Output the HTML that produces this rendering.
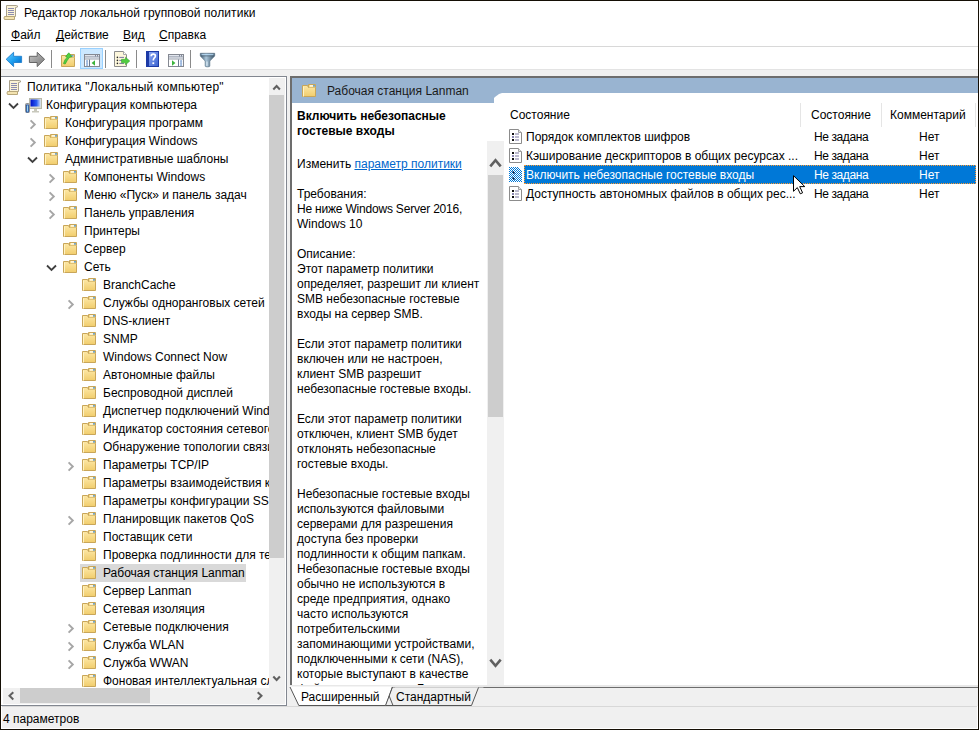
<!DOCTYPE html>
<html><head><meta charset="utf-8"><style>
*{margin:0;padding:0;box-sizing:border-box}
html,body{width:979px;height:730px;overflow:hidden;background:#f0f0f0}
body{position:relative;font-family:"Liberation Sans", sans-serif;font-size:12px;color:#000}
.a{position:absolute}
.ic{position:absolute;overflow:visible}
.t{position:absolute;white-space:nowrap;line-height:18px;height:18px}
u{text-decoration-skip-ink:none}
</style></head><body>
<!-- window frame -->
<div class="a" style="left:0;top:0;width:979px;height:730px;border:1px solid #140e04;background:#f0f0f0"></div>
<!-- title bar -->
<div class="a" style="left:1px;top:1px;width:977px;height:45px;background:#fff"></div>
<svg class="ic" style="left:3px;top:4px" width="16" height="16" viewBox="0 0 16 16">
<path d="M3.5 1.5H13.5Q15 1.5 14.5 3L12.5 3.5V12.5H3.5Z" fill="#fbf3d6" stroke="#a9a08a"/>
<path d="M1.5 12.5H11.5V15.5H1.5Q0.5 14 1.5 12.5Z" fill="#f3e3b0" stroke="#b8a77a"/>
<path d="M5 4.5H11M5 6.5H11M5 8.5H11M5 10.5H11" stroke="#8c8cb0" stroke-width="1"/>
</svg>
<div class="t" style="left:24px;top:4px;letter-spacing:0.1px">Редактор локальной групповой политики</div>
<!-- menu -->
<div class="t" style="left:11px;top:26px"><u>Ф</u>айл</div>
<div class="t" style="left:56px;top:26px"><u>Д</u>ействие</div>
<div class="t" style="left:123px;top:26px"><u>В</u>ид</div>
<div class="t" style="left:159px;top:26px"><u>С</u>правка</div>
<div class="a" style="left:1px;top:46px;width:977px;height:1px;background:#d8d8d8"></div>
<!-- toolbar -->
<div class="a" style="left:1px;top:47px;width:977px;height:22px;background:#fff"></div>
<div class="a" style="left:1px;top:69px;width:977px;height:1px;background:#e3e3e3"></div>

<svg class="ic" style="left:5px;top:51px" width="18" height="17" viewBox="0 0 18 17">
<defs><linearGradient id="bk" x1="0" y1="0" x2="1" y2="1"><stop offset="0" stop-color="#6fd0ff"/><stop offset="0.5" stop-color="#1ea0f0"/><stop offset="1" stop-color="#0060c0"/></linearGradient></defs>
<path d="M1.2 8.3L8.6 1.3V5.3H16.6V11.5H8.6V15.6Z" fill="url(#bk)" stroke="#2a86d0" stroke-width="1"/>
</svg>
<svg class="ic" style="left:28px;top:51px" width="18" height="17" viewBox="0 0 18 17">
<defs><linearGradient id="fw" x1="0" y1="0" x2="1" y2="1"><stop offset="0" stop-color="#c4c4c4"/><stop offset="1" stop-color="#7a7a7a"/></linearGradient></defs>
<path d="M16.6 8.3L9.2 1.3V5.3H1.4V11.5H9.2V15.6Z" fill="url(#fw)" stroke="#666" stroke-width="1"/>
</svg>
<div class="a" style="left:51px;top:50px;width:1px;height:18px;background:#8a8a8a"></div>
<svg class="ic" style="left:61px;top:52px" width="16" height="16" viewBox="0 0 16 16">
<defs><linearGradient id="fgu" x1="0" y1="0" x2="0" y2="1"><stop offset="0" stop-color="#fde8a6"/><stop offset="1" stop-color="#f1cd6c"/></linearGradient></defs>
<path d="M0.5 3.5H5.5L6.5 5.5H13.5V14.5H0.5Z" fill="url(#fgu)" stroke="#c9a659"/>
<path d="M6.5 5.5V2.5H13.5V5.5" fill="#f7dc8e" stroke="#c9a659"/>
<rect x="10" y="3.3" width="2.5" height="1.2" fill="#3d8fe0"/>
<path d="M2.5 11.5Q3.5 7.5 6.2 5.2L4.6 4.6L7.8 0.8L10.8 4.8L8.6 5.2Q6.2 8 4.2 12Z" fill="#52d040" stroke="#34a82a" stroke-width="0.7"/>
</svg>
<div class="a" style="left:80px;top:48px;width:23px;height:21px;background:#cce8ff;border:1px solid #99d1ff"></div>
<svg class="ic" style="left:84px;top:54px" width="16" height="13" viewBox="0 0 16 13">
<rect x="0.5" y="0.5" width="15" height="12" fill="#fff" stroke="#858992"/>
<rect x="1" y="1" width="14" height="2" fill="#e2e6ee"/><rect x="1" y="2.6" width="14" height="0.9" fill="#6a7386"/>
<rect x="11" y="1.2" width="1" height="1.2" fill="#6a7386"/><rect x="13" y="1.2" width="1" height="1.2" fill="#6a7386"/>
<rect x="1" y="3.5" width="14" height="1.5" fill="#e2e6ee"/><rect x="1" y="4.6" width="14" height="0.9" fill="#9aa0aa"/>
<rect x="5" y="5.5" width="1" height="7" fill="#6a7890"/>
<rect x="2" y="6.5" width="2.2" height="1" rx="0.5" fill="#3f75c0"/><rect x="2" y="8.5" width="2.2" height="1" rx="0.5" fill="#3f75c0"/><rect x="2" y="10.5" width="2.2" height="1" rx="0.5" fill="#3f75c0"/>
<path d="M11 6.2V11.8L7.6 9Z" fill="#3cb43c"/>
</svg>
<div class="a" style="left:105px;top:50px;width:1px;height:18px;background:#8a8a8a"></div>
<svg class="ic" style="left:114px;top:51px" width="17" height="16" viewBox="0 0 17 16">
<path d="M0.5 0.5H9.5L12.5 3.5V15.5H0.5Z" fill="#fdf7dc" stroke="#8c8c8c"/>
<path d="M9.5 0.5V3.5H12.5" fill="#fff" stroke="#a8a8a8"/>
<rect x="2.6" y="5.6" width="1.6" height="1.6" rx="0.8" fill="#222"/><rect x="2.6" y="8.6" width="1.6" height="1.6" rx="0.8" fill="#222"/><rect x="2.6" y="11.6" width="1.6" height="1.6" rx="0.8" fill="#222"/>
<path d="M5.3 6.4H10M5.3 9.4H10M5.3 12.4H10" stroke="#7a74a0"/>
<path d="M7.5 8.3H11.5V6.3L15.8 10L11.5 13.8V11.8H7.5Z" fill="#50cc40" stroke="#3aa830" stroke-width="0.6"/>
</svg>
<div class="a" style="left:136px;top:50px;width:1px;height:18px;background:#8a8a8a"></div>
<svg class="ic" style="left:146px;top:51px" width="13" height="16" viewBox="0 0 13 16">
<defs><linearGradient id="hp" x1="0" y1="0" x2="1" y2="1"><stop offset="0" stop-color="#8aa6f4"/><stop offset="1" stop-color="#3c64d0"/></linearGradient></defs>
<rect x="0" y="0" width="13" height="16" fill="#1c3aa6"/>
<rect x="3" y="1" width="9" height="14" fill="url(#hp)"/>
<path d="M5.2 5.2Q5.2 3.2 7.3 3.2Q9.4 3.2 9.4 5.1Q9.4 6.4 8 7.3Q7.3 7.9 7.3 9.6" fill="none" stroke="#fff" stroke-width="1.7"/>
<rect x="6.4" y="11.3" width="1.8" height="1.8" fill="#fff"/>
</svg>
<svg class="ic" style="left:168px;top:54px" width="16" height="13" viewBox="0 0 16 13">
<rect x="0.5" y="0.5" width="15" height="12" fill="#fff" stroke="#858992"/>
<rect x="1" y="1" width="14" height="2" fill="#e2e6ee"/><rect x="1" y="2.6" width="14" height="0.9" fill="#6a7386"/>
<rect x="11" y="1.2" width="1" height="1.2" fill="#6a7386"/><rect x="13" y="1.2" width="1" height="1.2" fill="#6a7386"/>
<rect x="1" y="3.5" width="14" height="1.5" fill="#e2e6ee"/><rect x="1" y="4.6" width="14" height="0.9" fill="#9aa0aa"/>
<rect x="10" y="5.5" width="1" height="7" fill="#6a7890"/>
<rect x="12" y="6.5" width="2.2" height="1" rx="0.5" fill="#3f75c0"/><rect x="12" y="8.5" width="2.2" height="1" rx="0.5" fill="#3f75c0"/><rect x="12" y="10.5" width="2.2" height="1" rx="0.5" fill="#3f75c0"/>
<path d="M4 6.2V11.8L7.4 9Z" fill="#3cb43c"/>
</svg>
<div class="a" style="left:190px;top:50px;width:1px;height:18px;background:#8a8a8a"></div>
<svg class="ic" style="left:200px;top:53px" width="15" height="14" viewBox="0 0 15 14">
<defs><linearGradient id="fl" x1="0" y1="0" x2="1" y2="0"><stop offset="0" stop-color="#3e566a"/><stop offset="0.4" stop-color="#aac6da"/><stop offset="1" stop-color="#3a5266"/></linearGradient></defs>
<path d="M0.3 0.3H14.7V3L9.8 8V13.2Q9.8 13.8 7.5 13.8Q5.2 13.8 5.2 13.2V8L0.3 3Z" fill="url(#fl)" stroke="#5a7488" stroke-width="0.7"/>
<rect x="1.5" y="1.2" width="12" height="1.1" fill="#b8dcf8"/><rect x="1" y="2.5" width="13" height="0.8" fill="#4a6276"/>
<path d="M7 8.5V12.8" stroke="#e8f4fc" stroke-width="1"/>
</svg>

<!-- tree pane -->
<div class="a" style="left:1px;top:76px;width:286px;height:630px;background:#fff;border-top:1px solid #828790;border-right:1px solid #828790;border-bottom:1px solid #828790"></div>
<div class="a" style="left:1px;top:77px;width:268px;height:611px;overflow:hidden">
<div style="position:absolute;left:-1px;top:-77px;width:979px;height:800px">
<svg class="ic" style="left:6px;top:79px" width="16" height="16" viewBox="0 0 16 16">
<path d="M3.5 1.5H13.5Q15 1.5 14.5 3L12.5 3.5V12.5H3.5Z" fill="#fbf3d6" stroke="#a9a08a"/>
<path d="M1.5 12.5H11.5V15.5H1.5Q0.5 14 1.5 12.5Z" fill="#f3e3b0" stroke="#b8a77a"/>
<path d="M5 4.5H11M5 6.5H11M5 8.5H11M5 10.5H11" stroke="#8c8cb0" stroke-width="1"/>
</svg>
<div class="t" style="left:27px;top:78px;letter-spacing:0.2px">Политика &quot;Локальный компьютер&quot;</div>
<svg class="ic" style="left:8px;top:102px" width="11" height="8" viewBox="0 0 11 8"><path d="M1 1.5L5.5 6L10 1.5" fill="none" stroke="#404040" stroke-width="1.8"/></svg>
<svg class="ic" style="left:25px;top:98px" width="17" height="16" viewBox="0 0 17 16">
<defs><linearGradient id="scr" x1="0" y1="0" x2="1" y2="0"><stop offset="0" stop-color="#0010c8"/><stop offset="0.6" stop-color="#2a5cf0"/><stop offset="1" stop-color="#c8dcff"/></linearGradient></defs>
<rect x="4.5" y="0.5" width="12" height="10" fill="#dcdcd0" stroke="#b8b8a8"/>
<rect x="5.5" y="1.5" width="10" height="7" fill="url(#scr)"/>
<path d="M9 11H12V13H14V14.5H7V13H9Z" fill="#c8c8bc"/>
<rect x="0.5" y="5.5" width="4" height="9" rx="1" fill="#c0c0c0" stroke="#909090"/>
<rect x="1.5" y="7" width="2" height="7" fill="#9ad4f4" stroke="#2050a0" stroke-width="0.8"/>
</svg>
<div class="t" style="left:46px;top:96px">Конфигурация компьютера</div>
<svg class="ic" style="left:29px;top:119px" width="8" height="11" viewBox="0 0 8 11"><path d="M1.6 1.4L5.8 5.5L1.6 9.6" fill="none" stroke="#a6a6a6" stroke-width="1.9"/></svg>
<svg class="ic" style="left:44px;top:116px" width="15" height="14" viewBox="0 0 15 14">
<defs><linearGradient id="fg44_116" x1="0" y1="0" x2="0" y2="1"><stop offset="0" stop-color="#fde8a6"/><stop offset="1" stop-color="#f1cd6c"/></linearGradient></defs>
<path d="M0.5 1.5H5.5L6.5 3.5H13.5V12.5H0.5Z" fill="url(#fg44_116)" stroke="#c9a659"/>
<path d="M6.5 3.5V0.5H13.5V3.5" fill="#f7dc8e" stroke="#c9a659"/>
<rect x="8" y="1.3" width="3" height="1.2" fill="#fff"/><rect x="11" y="1.3" width="2" height="1.2" fill="#3d8fe0"/>
<path d="M1.5 12.5V2.5" stroke="#fff3c4" stroke-width="1"/>
</svg>
<div class="t" style="left:65px;top:114px">Конфигурация программ</div>
<svg class="ic" style="left:29px;top:137px" width="8" height="11" viewBox="0 0 8 11"><path d="M1.6 1.4L5.8 5.5L1.6 9.6" fill="none" stroke="#a6a6a6" stroke-width="1.9"/></svg>
<svg class="ic" style="left:44px;top:134px" width="15" height="14" viewBox="0 0 15 14">
<defs><linearGradient id="fg44_134" x1="0" y1="0" x2="0" y2="1"><stop offset="0" stop-color="#fde8a6"/><stop offset="1" stop-color="#f1cd6c"/></linearGradient></defs>
<path d="M0.5 1.5H5.5L6.5 3.5H13.5V12.5H0.5Z" fill="url(#fg44_134)" stroke="#c9a659"/>
<path d="M6.5 3.5V0.5H13.5V3.5" fill="#f7dc8e" stroke="#c9a659"/>
<rect x="8" y="1.3" width="3" height="1.2" fill="#fff"/><rect x="11" y="1.3" width="2" height="1.2" fill="#3d8fe0"/>
<path d="M1.5 12.5V2.5" stroke="#fff3c4" stroke-width="1"/>
</svg>
<div class="t" style="left:65px;top:132px">Конфигурация Windows</div>
<svg class="ic" style="left:27px;top:156px" width="11" height="8" viewBox="0 0 11 8"><path d="M1 1.5L5.5 6L10 1.5" fill="none" stroke="#404040" stroke-width="1.8"/></svg>
<svg class="ic" style="left:44px;top:152px" width="15" height="14" viewBox="0 0 15 14">
<defs><linearGradient id="fg44_152" x1="0" y1="0" x2="0" y2="1"><stop offset="0" stop-color="#fde8a6"/><stop offset="1" stop-color="#f1cd6c"/></linearGradient></defs>
<path d="M0.5 1.5H5.5L6.5 3.5H13.5V12.5H0.5Z" fill="url(#fg44_152)" stroke="#c9a659"/>
<path d="M6.5 3.5V0.5H13.5V3.5" fill="#f7dc8e" stroke="#c9a659"/>
<rect x="8" y="1.3" width="3" height="1.2" fill="#fff"/><rect x="11" y="1.3" width="2" height="1.2" fill="#3d8fe0"/>
<path d="M1.5 12.5V2.5" stroke="#fff3c4" stroke-width="1"/>
</svg>
<div class="t" style="left:65px;top:150px">Административные шаблоны</div>
<svg class="ic" style="left:48px;top:173px" width="8" height="11" viewBox="0 0 8 11"><path d="M1.6 1.4L5.8 5.5L1.6 9.6" fill="none" stroke="#a6a6a6" stroke-width="1.9"/></svg>
<svg class="ic" style="left:63px;top:170px" width="15" height="14" viewBox="0 0 15 14">
<defs><linearGradient id="fg63_170" x1="0" y1="0" x2="0" y2="1"><stop offset="0" stop-color="#fde8a6"/><stop offset="1" stop-color="#f1cd6c"/></linearGradient></defs>
<path d="M0.5 1.5H5.5L6.5 3.5H13.5V12.5H0.5Z" fill="url(#fg63_170)" stroke="#c9a659"/>
<path d="M6.5 3.5V0.5H13.5V3.5" fill="#f7dc8e" stroke="#c9a659"/>
<rect x="8" y="1.3" width="3" height="1.2" fill="#fff"/><rect x="11" y="1.3" width="2" height="1.2" fill="#3d8fe0"/>
<path d="M1.5 12.5V2.5" stroke="#fff3c4" stroke-width="1"/>
</svg>
<div class="t" style="left:84px;top:168px">Компоненты Windows</div>
<svg class="ic" style="left:48px;top:191px" width="8" height="11" viewBox="0 0 8 11"><path d="M1.6 1.4L5.8 5.5L1.6 9.6" fill="none" stroke="#a6a6a6" stroke-width="1.9"/></svg>
<svg class="ic" style="left:63px;top:188px" width="15" height="14" viewBox="0 0 15 14">
<defs><linearGradient id="fg63_188" x1="0" y1="0" x2="0" y2="1"><stop offset="0" stop-color="#fde8a6"/><stop offset="1" stop-color="#f1cd6c"/></linearGradient></defs>
<path d="M0.5 1.5H5.5L6.5 3.5H13.5V12.5H0.5Z" fill="url(#fg63_188)" stroke="#c9a659"/>
<path d="M6.5 3.5V0.5H13.5V3.5" fill="#f7dc8e" stroke="#c9a659"/>
<rect x="8" y="1.3" width="3" height="1.2" fill="#fff"/><rect x="11" y="1.3" width="2" height="1.2" fill="#3d8fe0"/>
<path d="M1.5 12.5V2.5" stroke="#fff3c4" stroke-width="1"/>
</svg>
<div class="t" style="left:84px;top:186px">Меню «Пуск» и панель задач</div>
<svg class="ic" style="left:48px;top:209px" width="8" height="11" viewBox="0 0 8 11"><path d="M1.6 1.4L5.8 5.5L1.6 9.6" fill="none" stroke="#a6a6a6" stroke-width="1.9"/></svg>
<svg class="ic" style="left:63px;top:206px" width="15" height="14" viewBox="0 0 15 14">
<defs><linearGradient id="fg63_206" x1="0" y1="0" x2="0" y2="1"><stop offset="0" stop-color="#fde8a6"/><stop offset="1" stop-color="#f1cd6c"/></linearGradient></defs>
<path d="M0.5 1.5H5.5L6.5 3.5H13.5V12.5H0.5Z" fill="url(#fg63_206)" stroke="#c9a659"/>
<path d="M6.5 3.5V0.5H13.5V3.5" fill="#f7dc8e" stroke="#c9a659"/>
<rect x="8" y="1.3" width="3" height="1.2" fill="#fff"/><rect x="11" y="1.3" width="2" height="1.2" fill="#3d8fe0"/>
<path d="M1.5 12.5V2.5" stroke="#fff3c4" stroke-width="1"/>
</svg>
<div class="t" style="left:84px;top:204px">Панель управления</div>
<svg class="ic" style="left:63px;top:224px" width="15" height="14" viewBox="0 0 15 14">
<defs><linearGradient id="fg63_224" x1="0" y1="0" x2="0" y2="1"><stop offset="0" stop-color="#fde8a6"/><stop offset="1" stop-color="#f1cd6c"/></linearGradient></defs>
<path d="M0.5 1.5H5.5L6.5 3.5H13.5V12.5H0.5Z" fill="url(#fg63_224)" stroke="#c9a659"/>
<path d="M6.5 3.5V0.5H13.5V3.5" fill="#f7dc8e" stroke="#c9a659"/>
<rect x="8" y="1.3" width="3" height="1.2" fill="#fff"/><rect x="11" y="1.3" width="2" height="1.2" fill="#3d8fe0"/>
<path d="M1.5 12.5V2.5" stroke="#fff3c4" stroke-width="1"/>
</svg>
<div class="t" style="left:84px;top:222px">Принтеры</div>
<svg class="ic" style="left:63px;top:242px" width="15" height="14" viewBox="0 0 15 14">
<defs><linearGradient id="fg63_242" x1="0" y1="0" x2="0" y2="1"><stop offset="0" stop-color="#fde8a6"/><stop offset="1" stop-color="#f1cd6c"/></linearGradient></defs>
<path d="M0.5 1.5H5.5L6.5 3.5H13.5V12.5H0.5Z" fill="url(#fg63_242)" stroke="#c9a659"/>
<path d="M6.5 3.5V0.5H13.5V3.5" fill="#f7dc8e" stroke="#c9a659"/>
<rect x="8" y="1.3" width="3" height="1.2" fill="#fff"/><rect x="11" y="1.3" width="2" height="1.2" fill="#3d8fe0"/>
<path d="M1.5 12.5V2.5" stroke="#fff3c4" stroke-width="1"/>
</svg>
<div class="t" style="left:84px;top:240px">Сервер</div>
<svg class="ic" style="left:46px;top:264px" width="11" height="8" viewBox="0 0 11 8"><path d="M1 1.5L5.5 6L10 1.5" fill="none" stroke="#404040" stroke-width="1.8"/></svg>
<svg class="ic" style="left:63px;top:260px" width="15" height="14" viewBox="0 0 15 14">
<defs><linearGradient id="fg63_260" x1="0" y1="0" x2="0" y2="1"><stop offset="0" stop-color="#fde8a6"/><stop offset="1" stop-color="#f1cd6c"/></linearGradient></defs>
<path d="M0.5 1.5H5.5L6.5 3.5H13.5V12.5H0.5Z" fill="url(#fg63_260)" stroke="#c9a659"/>
<path d="M6.5 3.5V0.5H13.5V3.5" fill="#f7dc8e" stroke="#c9a659"/>
<rect x="8" y="1.3" width="3" height="1.2" fill="#fff"/><rect x="11" y="1.3" width="2" height="1.2" fill="#3d8fe0"/>
<path d="M1.5 12.5V2.5" stroke="#fff3c4" stroke-width="1"/>
</svg>
<div class="t" style="left:84px;top:258px">Сеть</div>
<svg class="ic" style="left:82px;top:278px" width="15" height="14" viewBox="0 0 15 14">
<defs><linearGradient id="fg82_278" x1="0" y1="0" x2="0" y2="1"><stop offset="0" stop-color="#fde8a6"/><stop offset="1" stop-color="#f1cd6c"/></linearGradient></defs>
<path d="M0.5 1.5H5.5L6.5 3.5H13.5V12.5H0.5Z" fill="url(#fg82_278)" stroke="#c9a659"/>
<path d="M6.5 3.5V0.5H13.5V3.5" fill="#f7dc8e" stroke="#c9a659"/>
<rect x="8" y="1.3" width="3" height="1.2" fill="#fff"/><rect x="11" y="1.3" width="2" height="1.2" fill="#3d8fe0"/>
<path d="M1.5 12.5V2.5" stroke="#fff3c4" stroke-width="1"/>
</svg>
<div class="t" style="left:103px;top:276px">BranchCache</div>
<svg class="ic" style="left:67px;top:299px" width="8" height="11" viewBox="0 0 8 11"><path d="M1.6 1.4L5.8 5.5L1.6 9.6" fill="none" stroke="#a6a6a6" stroke-width="1.9"/></svg>
<svg class="ic" style="left:82px;top:296px" width="15" height="14" viewBox="0 0 15 14">
<defs><linearGradient id="fg82_296" x1="0" y1="0" x2="0" y2="1"><stop offset="0" stop-color="#fde8a6"/><stop offset="1" stop-color="#f1cd6c"/></linearGradient></defs>
<path d="M0.5 1.5H5.5L6.5 3.5H13.5V12.5H0.5Z" fill="url(#fg82_296)" stroke="#c9a659"/>
<path d="M6.5 3.5V0.5H13.5V3.5" fill="#f7dc8e" stroke="#c9a659"/>
<rect x="8" y="1.3" width="3" height="1.2" fill="#fff"/><rect x="11" y="1.3" width="2" height="1.2" fill="#3d8fe0"/>
<path d="M1.5 12.5V2.5" stroke="#fff3c4" stroke-width="1"/>
</svg>
<div class="t" style="left:103px;top:294px">Службы одноранговых сетей</div>
<svg class="ic" style="left:82px;top:314px" width="15" height="14" viewBox="0 0 15 14">
<defs><linearGradient id="fg82_314" x1="0" y1="0" x2="0" y2="1"><stop offset="0" stop-color="#fde8a6"/><stop offset="1" stop-color="#f1cd6c"/></linearGradient></defs>
<path d="M0.5 1.5H5.5L6.5 3.5H13.5V12.5H0.5Z" fill="url(#fg82_314)" stroke="#c9a659"/>
<path d="M6.5 3.5V0.5H13.5V3.5" fill="#f7dc8e" stroke="#c9a659"/>
<rect x="8" y="1.3" width="3" height="1.2" fill="#fff"/><rect x="11" y="1.3" width="2" height="1.2" fill="#3d8fe0"/>
<path d="M1.5 12.5V2.5" stroke="#fff3c4" stroke-width="1"/>
</svg>
<div class="t" style="left:103px;top:312px">DNS-клиент</div>
<svg class="ic" style="left:82px;top:332px" width="15" height="14" viewBox="0 0 15 14">
<defs><linearGradient id="fg82_332" x1="0" y1="0" x2="0" y2="1"><stop offset="0" stop-color="#fde8a6"/><stop offset="1" stop-color="#f1cd6c"/></linearGradient></defs>
<path d="M0.5 1.5H5.5L6.5 3.5H13.5V12.5H0.5Z" fill="url(#fg82_332)" stroke="#c9a659"/>
<path d="M6.5 3.5V0.5H13.5V3.5" fill="#f7dc8e" stroke="#c9a659"/>
<rect x="8" y="1.3" width="3" height="1.2" fill="#fff"/><rect x="11" y="1.3" width="2" height="1.2" fill="#3d8fe0"/>
<path d="M1.5 12.5V2.5" stroke="#fff3c4" stroke-width="1"/>
</svg>
<div class="t" style="left:103px;top:330px">SNMP</div>
<svg class="ic" style="left:82px;top:350px" width="15" height="14" viewBox="0 0 15 14">
<defs><linearGradient id="fg82_350" x1="0" y1="0" x2="0" y2="1"><stop offset="0" stop-color="#fde8a6"/><stop offset="1" stop-color="#f1cd6c"/></linearGradient></defs>
<path d="M0.5 1.5H5.5L6.5 3.5H13.5V12.5H0.5Z" fill="url(#fg82_350)" stroke="#c9a659"/>
<path d="M6.5 3.5V0.5H13.5V3.5" fill="#f7dc8e" stroke="#c9a659"/>
<rect x="8" y="1.3" width="3" height="1.2" fill="#fff"/><rect x="11" y="1.3" width="2" height="1.2" fill="#3d8fe0"/>
<path d="M1.5 12.5V2.5" stroke="#fff3c4" stroke-width="1"/>
</svg>
<div class="t" style="left:103px;top:348px">Windows Connect Now</div>
<svg class="ic" style="left:82px;top:368px" width="15" height="14" viewBox="0 0 15 14">
<defs><linearGradient id="fg82_368" x1="0" y1="0" x2="0" y2="1"><stop offset="0" stop-color="#fde8a6"/><stop offset="1" stop-color="#f1cd6c"/></linearGradient></defs>
<path d="M0.5 1.5H5.5L6.5 3.5H13.5V12.5H0.5Z" fill="url(#fg82_368)" stroke="#c9a659"/>
<path d="M6.5 3.5V0.5H13.5V3.5" fill="#f7dc8e" stroke="#c9a659"/>
<rect x="8" y="1.3" width="3" height="1.2" fill="#fff"/><rect x="11" y="1.3" width="2" height="1.2" fill="#3d8fe0"/>
<path d="M1.5 12.5V2.5" stroke="#fff3c4" stroke-width="1"/>
</svg>
<div class="t" style="left:103px;top:366px">Автономные файлы</div>
<svg class="ic" style="left:82px;top:386px" width="15" height="14" viewBox="0 0 15 14">
<defs><linearGradient id="fg82_386" x1="0" y1="0" x2="0" y2="1"><stop offset="0" stop-color="#fde8a6"/><stop offset="1" stop-color="#f1cd6c"/></linearGradient></defs>
<path d="M0.5 1.5H5.5L6.5 3.5H13.5V12.5H0.5Z" fill="url(#fg82_386)" stroke="#c9a659"/>
<path d="M6.5 3.5V0.5H13.5V3.5" fill="#f7dc8e" stroke="#c9a659"/>
<rect x="8" y="1.3" width="3" height="1.2" fill="#fff"/><rect x="11" y="1.3" width="2" height="1.2" fill="#3d8fe0"/>
<path d="M1.5 12.5V2.5" stroke="#fff3c4" stroke-width="1"/>
</svg>
<div class="t" style="left:103px;top:384px">Беспроводной дисплей</div>
<svg class="ic" style="left:82px;top:404px" width="15" height="14" viewBox="0 0 15 14">
<defs><linearGradient id="fg82_404" x1="0" y1="0" x2="0" y2="1"><stop offset="0" stop-color="#fde8a6"/><stop offset="1" stop-color="#f1cd6c"/></linearGradient></defs>
<path d="M0.5 1.5H5.5L6.5 3.5H13.5V12.5H0.5Z" fill="url(#fg82_404)" stroke="#c9a659"/>
<path d="M6.5 3.5V0.5H13.5V3.5" fill="#f7dc8e" stroke="#c9a659"/>
<rect x="8" y="1.3" width="3" height="1.2" fill="#fff"/><rect x="11" y="1.3" width="2" height="1.2" fill="#3d8fe0"/>
<path d="M1.5 12.5V2.5" stroke="#fff3c4" stroke-width="1"/>
</svg>
<div class="t" style="left:103px;top:402px">Диспетчер подключений Windows</div>
<svg class="ic" style="left:82px;top:422px" width="15" height="14" viewBox="0 0 15 14">
<defs><linearGradient id="fg82_422" x1="0" y1="0" x2="0" y2="1"><stop offset="0" stop-color="#fde8a6"/><stop offset="1" stop-color="#f1cd6c"/></linearGradient></defs>
<path d="M0.5 1.5H5.5L6.5 3.5H13.5V12.5H0.5Z" fill="url(#fg82_422)" stroke="#c9a659"/>
<path d="M6.5 3.5V0.5H13.5V3.5" fill="#f7dc8e" stroke="#c9a659"/>
<rect x="8" y="1.3" width="3" height="1.2" fill="#fff"/><rect x="11" y="1.3" width="2" height="1.2" fill="#3d8fe0"/>
<path d="M1.5 12.5V2.5" stroke="#fff3c4" stroke-width="1"/>
</svg>
<div class="t" style="left:103px;top:420px">Индикатор состояния сетевого подключения</div>
<svg class="ic" style="left:82px;top:440px" width="15" height="14" viewBox="0 0 15 14">
<defs><linearGradient id="fg82_440" x1="0" y1="0" x2="0" y2="1"><stop offset="0" stop-color="#fde8a6"/><stop offset="1" stop-color="#f1cd6c"/></linearGradient></defs>
<path d="M0.5 1.5H5.5L6.5 3.5H13.5V12.5H0.5Z" fill="url(#fg82_440)" stroke="#c9a659"/>
<path d="M6.5 3.5V0.5H13.5V3.5" fill="#f7dc8e" stroke="#c9a659"/>
<rect x="8" y="1.3" width="3" height="1.2" fill="#fff"/><rect x="11" y="1.3" width="2" height="1.2" fill="#3d8fe0"/>
<path d="M1.5 12.5V2.5" stroke="#fff3c4" stroke-width="1"/>
</svg>
<div class="t" style="left:103px;top:438px">Обнаружение топологии связи</div>
<svg class="ic" style="left:67px;top:461px" width="8" height="11" viewBox="0 0 8 11"><path d="M1.6 1.4L5.8 5.5L1.6 9.6" fill="none" stroke="#a6a6a6" stroke-width="1.9"/></svg>
<svg class="ic" style="left:82px;top:458px" width="15" height="14" viewBox="0 0 15 14">
<defs><linearGradient id="fg82_458" x1="0" y1="0" x2="0" y2="1"><stop offset="0" stop-color="#fde8a6"/><stop offset="1" stop-color="#f1cd6c"/></linearGradient></defs>
<path d="M0.5 1.5H5.5L6.5 3.5H13.5V12.5H0.5Z" fill="url(#fg82_458)" stroke="#c9a659"/>
<path d="M6.5 3.5V0.5H13.5V3.5" fill="#f7dc8e" stroke="#c9a659"/>
<rect x="8" y="1.3" width="3" height="1.2" fill="#fff"/><rect x="11" y="1.3" width="2" height="1.2" fill="#3d8fe0"/>
<path d="M1.5 12.5V2.5" stroke="#fff3c4" stroke-width="1"/>
</svg>
<div class="t" style="left:103px;top:456px">Параметры TCP/IP</div>
<svg class="ic" style="left:82px;top:476px" width="15" height="14" viewBox="0 0 15 14">
<defs><linearGradient id="fg82_476" x1="0" y1="0" x2="0" y2="1"><stop offset="0" stop-color="#fde8a6"/><stop offset="1" stop-color="#f1cd6c"/></linearGradient></defs>
<path d="M0.5 1.5H5.5L6.5 3.5H13.5V12.5H0.5Z" fill="url(#fg82_476)" stroke="#c9a659"/>
<path d="M6.5 3.5V0.5H13.5V3.5" fill="#f7dc8e" stroke="#c9a659"/>
<rect x="8" y="1.3" width="3" height="1.2" fill="#fff"/><rect x="11" y="1.3" width="2" height="1.2" fill="#3d8fe0"/>
<path d="M1.5 12.5V2.5" stroke="#fff3c4" stroke-width="1"/>
</svg>
<div class="t" style="left:103px;top:474px">Параметры взаимодействия клиента</div>
<svg class="ic" style="left:82px;top:494px" width="15" height="14" viewBox="0 0 15 14">
<defs><linearGradient id="fg82_494" x1="0" y1="0" x2="0" y2="1"><stop offset="0" stop-color="#fde8a6"/><stop offset="1" stop-color="#f1cd6c"/></linearGradient></defs>
<path d="M0.5 1.5H5.5L6.5 3.5H13.5V12.5H0.5Z" fill="url(#fg82_494)" stroke="#c9a659"/>
<path d="M6.5 3.5V0.5H13.5V3.5" fill="#f7dc8e" stroke="#c9a659"/>
<rect x="8" y="1.3" width="3" height="1.2" fill="#fff"/><rect x="11" y="1.3" width="2" height="1.2" fill="#3d8fe0"/>
<path d="M1.5 12.5V2.5" stroke="#fff3c4" stroke-width="1"/>
</svg>
<div class="t" style="left:103px;top:492px">Параметры конфигурации SSL</div>
<svg class="ic" style="left:67px;top:515px" width="8" height="11" viewBox="0 0 8 11"><path d="M1.6 1.4L5.8 5.5L1.6 9.6" fill="none" stroke="#a6a6a6" stroke-width="1.9"/></svg>
<svg class="ic" style="left:82px;top:512px" width="15" height="14" viewBox="0 0 15 14">
<defs><linearGradient id="fg82_512" x1="0" y1="0" x2="0" y2="1"><stop offset="0" stop-color="#fde8a6"/><stop offset="1" stop-color="#f1cd6c"/></linearGradient></defs>
<path d="M0.5 1.5H5.5L6.5 3.5H13.5V12.5H0.5Z" fill="url(#fg82_512)" stroke="#c9a659"/>
<path d="M6.5 3.5V0.5H13.5V3.5" fill="#f7dc8e" stroke="#c9a659"/>
<rect x="8" y="1.3" width="3" height="1.2" fill="#fff"/><rect x="11" y="1.3" width="2" height="1.2" fill="#3d8fe0"/>
<path d="M1.5 12.5V2.5" stroke="#fff3c4" stroke-width="1"/>
</svg>
<div class="t" style="left:103px;top:510px">Планировщик пакетов QoS</div>
<svg class="ic" style="left:82px;top:530px" width="15" height="14" viewBox="0 0 15 14">
<defs><linearGradient id="fg82_530" x1="0" y1="0" x2="0" y2="1"><stop offset="0" stop-color="#fde8a6"/><stop offset="1" stop-color="#f1cd6c"/></linearGradient></defs>
<path d="M0.5 1.5H5.5L6.5 3.5H13.5V12.5H0.5Z" fill="url(#fg82_530)" stroke="#c9a659"/>
<path d="M6.5 3.5V0.5H13.5V3.5" fill="#f7dc8e" stroke="#c9a659"/>
<rect x="8" y="1.3" width="3" height="1.2" fill="#fff"/><rect x="11" y="1.3" width="2" height="1.2" fill="#3d8fe0"/>
<path d="M1.5 12.5V2.5" stroke="#fff3c4" stroke-width="1"/>
</svg>
<div class="t" style="left:103px;top:528px">Поставщик сети</div>
<svg class="ic" style="left:82px;top:548px" width="15" height="14" viewBox="0 0 15 14">
<defs><linearGradient id="fg82_548" x1="0" y1="0" x2="0" y2="1"><stop offset="0" stop-color="#fde8a6"/><stop offset="1" stop-color="#f1cd6c"/></linearGradient></defs>
<path d="M0.5 1.5H5.5L6.5 3.5H13.5V12.5H0.5Z" fill="url(#fg82_548)" stroke="#c9a659"/>
<path d="M6.5 3.5V0.5H13.5V3.5" fill="#f7dc8e" stroke="#c9a659"/>
<rect x="8" y="1.3" width="3" height="1.2" fill="#fff"/><rect x="11" y="1.3" width="2" height="1.2" fill="#3d8fe0"/>
<path d="M1.5 12.5V2.5" stroke="#fff3c4" stroke-width="1"/>
</svg>
<div class="t" style="left:103px;top:546px">Проверка подлинности для телефонии</div>
<div style="position:absolute;left:80px;top:564px;width:166px;height:18px;background:#d9d9d9"></div>
<svg class="ic" style="left:82px;top:566px" width="15" height="14" viewBox="0 0 15 14">
<defs><linearGradient id="fg82_566" x1="0" y1="0" x2="0" y2="1"><stop offset="0" stop-color="#fde8a6"/><stop offset="1" stop-color="#f1cd6c"/></linearGradient></defs>
<path d="M0.5 1.5H5.5L6.5 3.5H13.5V12.5H0.5Z" fill="url(#fg82_566)" stroke="#c9a659"/>
<path d="M6.5 3.5V0.5H13.5V3.5" fill="#f7dc8e" stroke="#c9a659"/>
<rect x="8" y="1.3" width="3" height="1.2" fill="#fff"/><rect x="11" y="1.3" width="2" height="1.2" fill="#3d8fe0"/>
<path d="M1.5 12.5V2.5" stroke="#fff3c4" stroke-width="1"/>
</svg>
<div class="t" style="left:103px;top:564px">Рабочая станция Lanman</div>
<svg class="ic" style="left:82px;top:584px" width="15" height="14" viewBox="0 0 15 14">
<defs><linearGradient id="fg82_584" x1="0" y1="0" x2="0" y2="1"><stop offset="0" stop-color="#fde8a6"/><stop offset="1" stop-color="#f1cd6c"/></linearGradient></defs>
<path d="M0.5 1.5H5.5L6.5 3.5H13.5V12.5H0.5Z" fill="url(#fg82_584)" stroke="#c9a659"/>
<path d="M6.5 3.5V0.5H13.5V3.5" fill="#f7dc8e" stroke="#c9a659"/>
<rect x="8" y="1.3" width="3" height="1.2" fill="#fff"/><rect x="11" y="1.3" width="2" height="1.2" fill="#3d8fe0"/>
<path d="M1.5 12.5V2.5" stroke="#fff3c4" stroke-width="1"/>
</svg>
<div class="t" style="left:103px;top:582px">Сервер Lanman</div>
<svg class="ic" style="left:82px;top:602px" width="15" height="14" viewBox="0 0 15 14">
<defs><linearGradient id="fg82_602" x1="0" y1="0" x2="0" y2="1"><stop offset="0" stop-color="#fde8a6"/><stop offset="1" stop-color="#f1cd6c"/></linearGradient></defs>
<path d="M0.5 1.5H5.5L6.5 3.5H13.5V12.5H0.5Z" fill="url(#fg82_602)" stroke="#c9a659"/>
<path d="M6.5 3.5V0.5H13.5V3.5" fill="#f7dc8e" stroke="#c9a659"/>
<rect x="8" y="1.3" width="3" height="1.2" fill="#fff"/><rect x="11" y="1.3" width="2" height="1.2" fill="#3d8fe0"/>
<path d="M1.5 12.5V2.5" stroke="#fff3c4" stroke-width="1"/>
</svg>
<div class="t" style="left:103px;top:600px">Сетевая изоляция</div>
<svg class="ic" style="left:67px;top:623px" width="8" height="11" viewBox="0 0 8 11"><path d="M1.6 1.4L5.8 5.5L1.6 9.6" fill="none" stroke="#a6a6a6" stroke-width="1.9"/></svg>
<svg class="ic" style="left:82px;top:620px" width="15" height="14" viewBox="0 0 15 14">
<defs><linearGradient id="fg82_620" x1="0" y1="0" x2="0" y2="1"><stop offset="0" stop-color="#fde8a6"/><stop offset="1" stop-color="#f1cd6c"/></linearGradient></defs>
<path d="M0.5 1.5H5.5L6.5 3.5H13.5V12.5H0.5Z" fill="url(#fg82_620)" stroke="#c9a659"/>
<path d="M6.5 3.5V0.5H13.5V3.5" fill="#f7dc8e" stroke="#c9a659"/>
<rect x="8" y="1.3" width="3" height="1.2" fill="#fff"/><rect x="11" y="1.3" width="2" height="1.2" fill="#3d8fe0"/>
<path d="M1.5 12.5V2.5" stroke="#fff3c4" stroke-width="1"/>
</svg>
<div class="t" style="left:103px;top:618px">Сетевые подключения</div>
<svg class="ic" style="left:67px;top:641px" width="8" height="11" viewBox="0 0 8 11"><path d="M1.6 1.4L5.8 5.5L1.6 9.6" fill="none" stroke="#a6a6a6" stroke-width="1.9"/></svg>
<svg class="ic" style="left:82px;top:638px" width="15" height="14" viewBox="0 0 15 14">
<defs><linearGradient id="fg82_638" x1="0" y1="0" x2="0" y2="1"><stop offset="0" stop-color="#fde8a6"/><stop offset="1" stop-color="#f1cd6c"/></linearGradient></defs>
<path d="M0.5 1.5H5.5L6.5 3.5H13.5V12.5H0.5Z" fill="url(#fg82_638)" stroke="#c9a659"/>
<path d="M6.5 3.5V0.5H13.5V3.5" fill="#f7dc8e" stroke="#c9a659"/>
<rect x="8" y="1.3" width="3" height="1.2" fill="#fff"/><rect x="11" y="1.3" width="2" height="1.2" fill="#3d8fe0"/>
<path d="M1.5 12.5V2.5" stroke="#fff3c4" stroke-width="1"/>
</svg>
<div class="t" style="left:103px;top:636px">Служба WLAN</div>
<svg class="ic" style="left:67px;top:659px" width="8" height="11" viewBox="0 0 8 11"><path d="M1.6 1.4L5.8 5.5L1.6 9.6" fill="none" stroke="#a6a6a6" stroke-width="1.9"/></svg>
<svg class="ic" style="left:82px;top:656px" width="15" height="14" viewBox="0 0 15 14">
<defs><linearGradient id="fg82_656" x1="0" y1="0" x2="0" y2="1"><stop offset="0" stop-color="#fde8a6"/><stop offset="1" stop-color="#f1cd6c"/></linearGradient></defs>
<path d="M0.5 1.5H5.5L6.5 3.5H13.5V12.5H0.5Z" fill="url(#fg82_656)" stroke="#c9a659"/>
<path d="M6.5 3.5V0.5H13.5V3.5" fill="#f7dc8e" stroke="#c9a659"/>
<rect x="8" y="1.3" width="3" height="1.2" fill="#fff"/><rect x="11" y="1.3" width="2" height="1.2" fill="#3d8fe0"/>
<path d="M1.5 12.5V2.5" stroke="#fff3c4" stroke-width="1"/>
</svg>
<div class="t" style="left:103px;top:654px">Служба WWAN</div>
<svg class="ic" style="left:82px;top:674px" width="15" height="14" viewBox="0 0 15 14">
<defs><linearGradient id="fg82_674" x1="0" y1="0" x2="0" y2="1"><stop offset="0" stop-color="#fde8a6"/><stop offset="1" stop-color="#f1cd6c"/></linearGradient></defs>
<path d="M0.5 1.5H5.5L6.5 3.5H13.5V12.5H0.5Z" fill="url(#fg82_674)" stroke="#c9a659"/>
<path d="M6.5 3.5V0.5H13.5V3.5" fill="#f7dc8e" stroke="#c9a659"/>
<rect x="8" y="1.3" width="3" height="1.2" fill="#fff"/><rect x="11" y="1.3" width="2" height="1.2" fill="#3d8fe0"/>
<path d="M1.5 12.5V2.5" stroke="#fff3c4" stroke-width="1"/>
</svg>
<div class="t" style="left:103px;top:672px">Фоновая интеллектуальная служба передачи (BITS)</div>
</div></div>
<!-- tree v scrollbar -->
<div class="a" style="left:269px;top:78px;width:16px;height:610px;background:#f0f0f0"></div>
<div class="a" style="left:269px;top:95px;width:15px;height:463px;background:#cdcdcd"></div>
<svg class="ic" style="left:272px;top:83px" width="10" height="8" viewBox="0 0 10 8"><path d="M1.3 6.4L4.6 3L7.9 6.4" fill="none" stroke="#606060" stroke-width="2.1"/></svg>
<svg class="ic" style="left:272px;top:675px" width="10" height="8" viewBox="0 0 10 8"><path d="M1.3 1.6L4.6 5L7.9 1.6" fill="none" stroke="#606060" stroke-width="2.1"/></svg>
<!-- tree h scrollbar -->
<div class="a" style="left:3px;top:688px;width:282px;height:16px;background:#f0f0f0"></div>
<div class="a" style="left:20px;top:688px;width:130px;height:15px;background:#cdcdcd"></div>
<svg class="ic" style="left:7px;top:691px" width="8" height="10" viewBox="0 0 8 10"><path d="M6.3 1.2L2.5 4.8L6.3 8.4" fill="none" stroke="#606060" stroke-width="2"/></svg>
<svg class="ic" style="left:256px;top:691px" width="8" height="10" viewBox="0 0 8 10"><path d="M1.7 1.2L5.5 4.8L1.7 8.4" fill="none" stroke="#606060" stroke-width="2"/></svg>
<!-- right pane frame -->
<div class="a" style="left:290px;top:76px;width:688px;height:611px;background:#fff;border-top:2px solid #6d6d6d;border-left:2px solid #6d6d6d"></div>
<!-- header band -->
<div class="a" style="left:292px;top:78px;width:686px;height:25px;background:#99b4d1"></div>
<div class="a" style="left:494px;top:93px;width:484px;height:20px;background:#fff;clip-path:polygon(0 100%,0 5px,1px 4px,5px 1px,8px 0,100% 0,100% 100%)"></div>
<svg class="ic" style="left:302px;top:84px" width="15" height="14" viewBox="0 0 15 14">
<defs><linearGradient id="fg302_84" x1="0" y1="0" x2="0" y2="1"><stop offset="0" stop-color="#fde8a6"/><stop offset="1" stop-color="#f1cd6c"/></linearGradient></defs>
<path d="M0.5 1.5H5.5L6.5 3.5H13.5V12.5H0.5Z" fill="url(#fg302_84)" stroke="#c9a659"/>
<path d="M6.5 3.5V0.5H13.5V3.5" fill="#f7dc8e" stroke="#c9a659"/>
<rect x="8" y="1.3" width="3" height="1.2" fill="#fff"/><rect x="11" y="1.3" width="2" height="1.2" fill="#3d8fe0"/>
<path d="M1.5 12.5V2.5" stroke="#fff3c4" stroke-width="1"/>
</svg>
<div class="t" style="left:327px;top:82px;color:#1a1a1a">Рабочая станция Lanman</div>
<!-- description -->
<div class="a" style="left:292px;top:103px;width:195px;height:582px;overflow:hidden">
<div style="position:absolute;left:-292px;top:-103px;width:979px;height:800px">
<div class="t" style="left:297px;top:107px;font-weight:bold">Включить небезопасные</div>
<div class="t" style="left:297px;top:122px;font-weight:bold">гостевые входы</div>
<div class="t" style="left:297px;top:155px">Изменить <span style="color:#0066cc;text-decoration:underline">параметр политики</span></div>
<div class="t" style="left:297px;top:185px">Требования:</div>
<div class="t" style="left:297px;top:200px;letter-spacing:-0.2px">Не ниже Windows Server 2016,</div>
<div class="t" style="left:297px;top:215px">Windows 10</div>
<div class="t" style="left:297px;top:245px">Описание:</div>
<div class="t" style="left:297px;top:260px">Этот параметр политики</div>
<div class="t" style="left:297px;top:275px">определяет, разрешит ли клиент</div>
<div class="t" style="left:297px;top:290px">SMB небезопасные гостевые</div>
<div class="t" style="left:297px;top:305px">входы на сервер SMB.</div>
<div class="t" style="left:297px;top:335px">Если этот параметр политики</div>
<div class="t" style="left:297px;top:350px">включен или не настроен,</div>
<div class="t" style="left:297px;top:365px">клиент SMB разрешит</div>
<div class="t" style="left:297px;top:380px">небезопасные гостевые входы.</div>
<div class="t" style="left:297px;top:410px">Если этот параметр политики</div>
<div class="t" style="left:297px;top:425px">отключен, клиент SMB будет</div>
<div class="t" style="left:297px;top:440px">отклонять небезопасные</div>
<div class="t" style="left:297px;top:455px">гостевые входы.</div>
<div class="t" style="left:297px;top:485px">Небезопасные гостевые входы</div>
<div class="t" style="left:297px;top:500px">используются файловыми</div>
<div class="t" style="left:297px;top:515px">серверами для разрешения</div>
<div class="t" style="left:297px;top:530px">доступа без проверки</div>
<div class="t" style="left:297px;top:545px">подлинности к общим папкам.</div>
<div class="t" style="left:297px;top:560px">Небезопасные гостевые входы</div>
<div class="t" style="left:297px;top:575px">обычно не используются в</div>
<div class="t" style="left:297px;top:590px">среде предприятия, однако</div>
<div class="t" style="left:297px;top:605px">часто используются</div>
<div class="t" style="left:297px;top:620px">потребительскими</div>
<div class="t" style="left:297px;top:635px">запоминающими устройствами,</div>
<div class="t" style="left:297px;top:650px">подключенными к сети (NAS),</div>
<div class="t" style="left:297px;top:665px">которые выступают в качестве</div>
<div class="t" style="left:297px;top:680px">файловых серверов. Благодаря</div>
</div></div>
<div class="a" style="left:487px;top:141px;width:17px;height:544px;background:#f0f0f0"></div>
<div class="a" style="left:488px;top:175px;width:15px;height:242px;background:#cdcdcd"></div>
<svg class="ic" style="left:489px;top:157px" width="13" height="11" viewBox="0 0 13 11"><path d="M1.3 9.3L6.5 3.2L11.7 9.3" fill="none" stroke="#606060" stroke-width="2.6"/></svg>
<svg class="ic" style="left:489px;top:658px" width="13" height="11" viewBox="0 0 13 11"><path d="M1.3 1.7L6.5 7.8L11.7 1.7" fill="none" stroke="#606060" stroke-width="2.6"/></svg>
<!-- list header -->
<div class="t" style="left:510px;top:106px">Состояние</div>
<div class="t" style="left:811px;top:106px">Состояние</div>
<div class="t" style="left:890px;top:106px">Комментарий</div>
<div class="a" style="left:800px;top:103px;width:1px;height:24px;background:#e5e5e5"></div>
<div class="a" style="left:881px;top:103px;width:1px;height:24px;background:#e5e5e5"></div>
<div class="a" style="left:975px;top:103px;width:1px;height:24px;background:#e5e5e5"></div>
<svg class="ic" style="left:509px;top:129px" width="13" height="15" viewBox="0 0 13 15">
<path d="M0.5 0.5H9.5L12.5 3.5V14.5H0.5Z" fill="#fff" stroke="#8c8c8c"/>
<path d="M9.5 0.5V3.5H12.5" fill="#e8e8e8" stroke="#a0a0a0"/>
<rect x="3" y="4" width="2" height="2" fill="#101010"/><rect x="3" y="7" width="2" height="2" fill="#8884b0"/><rect x="3" y="10" width="2" height="2" fill="#101010"/>
<path d="M6 5H10M6 8H10M6 11H10" stroke="#7a76a0" stroke-width="1"/>
</svg>
<div class="t" style="left:526px;top:128px;color:#000">Порядок комплектов шифров</div>
<div class="t" style="left:814px;top:128px;color:#000;letter-spacing:-0.4px">Не задана</div>
<div class="t" style="left:919px;top:128px;color:#000">Нет</div>
<svg class="ic" style="left:509px;top:148px" width="13" height="15" viewBox="0 0 13 15">
<path d="M0.5 0.5H9.5L12.5 3.5V14.5H0.5Z" fill="#fff" stroke="#8c8c8c"/>
<path d="M9.5 0.5V3.5H12.5" fill="#e8e8e8" stroke="#a0a0a0"/>
<rect x="3" y="4" width="2" height="2" fill="#101010"/><rect x="3" y="7" width="2" height="2" fill="#8884b0"/><rect x="3" y="10" width="2" height="2" fill="#101010"/>
<path d="M6 5H10M6 8H10M6 11H10" stroke="#7a76a0" stroke-width="1"/>
</svg>
<div class="t" style="left:526px;top:147px;color:#000">Кэширование дескрипторов в общих ресурсах ...</div>
<div class="t" style="left:814px;top:147px;color:#000;letter-spacing:-0.4px">Не задана</div>
<div class="t" style="left:919px;top:147px;color:#000">Нет</div>
<div style="position:absolute;left:524px;top:165px;width:452px;height:19px;background:#0078d7;outline:1px dotted #ff9a30;outline-offset:-1px"></div>
<svg class="ic" style="left:509px;top:167px" width="13" height="15" viewBox="0 0 13 15" shape-rendering="crispEdges">
<defs><pattern id="chk" width="2" height="2" patternUnits="userSpaceOnUse"><rect width="2" height="2" fill="#ffffff"/><rect width="1" height="1" fill="#0078d7"/><rect x="1" y="1" width="1" height="1" fill="#0078d7"/></pattern></defs>
<path d="M0 0H9L13 4V15H0Z" fill="url(#chk)"/>
<path d="M3.5 4.5L5.5 6.5M3.5 10.5L5.5 12.5" stroke="#0a1a40" stroke-width="1.3" shape-rendering="auto"/>
</svg>
<div class="t" style="left:526px;top:166px;color:#fff">Включить небезопасные гостевые входы</div>
<div class="t" style="left:814px;top:166px;color:#fff;letter-spacing:-0.4px">Не задана</div>
<div class="t" style="left:919px;top:166px;color:#fff">Нет</div>
<svg class="ic" style="left:509px;top:186px" width="13" height="15" viewBox="0 0 13 15">
<path d="M0.5 0.5H9.5L12.5 3.5V14.5H0.5Z" fill="#fff" stroke="#8c8c8c"/>
<path d="M9.5 0.5V3.5H12.5" fill="#e8e8e8" stroke="#a0a0a0"/>
<rect x="3" y="4" width="2" height="2" fill="#101010"/><rect x="3" y="7" width="2" height="2" fill="#8884b0"/><rect x="3" y="10" width="2" height="2" fill="#101010"/>
<path d="M6 5H10M6 8H10M6 11H10" stroke="#7a76a0" stroke-width="1"/>
</svg>
<div class="t" style="left:526px;top:185px;color:#000">Доступность автономных файлов в общих рес...</div>
<div class="t" style="left:814px;top:185px;color:#000;letter-spacing:-0.4px">Не задана</div>
<div class="t" style="left:919px;top:185px;color:#000">Нет</div>
<!-- cursor -->
<svg class="ic" style="left:793px;top:175px" width="14" height="21" viewBox="0 0 14 21"><path d="M0.5 0.7V16.3L4.3 12.6L7.3 18.8L9.6 17.8L6.7 11.6H11.8Z" fill="#fff" stroke="#000" stroke-width="1"/></svg>
<!-- tab strip -->
<div class="a" style="left:290px;top:685px;width:688px;height:2px;background:#e8e8e8"></div>
<div class="a" style="left:290px;top:687px;width:688px;height:1px;background:#6d6d6d"></div>

<svg class="ic" style="left:288px;top:686px" width="200" height="21" viewBox="0 0 200 21">
<path d="M99.5 1.5L107 1.5L98 19.5H188.5L195.5 1.5" fill="#f0f0f0" stroke="none"/>
<path d="M104 1.5L97 19.5H183.5L190.5 1.5" fill="#f0f0f0" stroke="#555" stroke-width="1"/>
<path d="M100 7L105 19.5" stroke="#555" stroke-width="1"/>
<path d="M1.5 0.5L10.5 19.5H97.5L104 0.5Z" fill="#fff"/>
<path d="M2 1L10.8 19.5H97.5L104.5 1" fill="none" stroke="#555" stroke-width="1"/>
</svg>
<div class="t" style="left:301px;top:688px">Расширенный</div>
<div class="t" style="left:396px;top:688px">Стандартный</div>

<div class="a" style="left:1px;top:706px;width:977px;height:1px;background:#d8d8d8"></div>
<div class="a" style="left:1px;top:706px;width:977px;height:23px;border-left:1px solid #fff;border-right:1px solid #fff;border-bottom:1px solid #fff"></div>
<div class="t" style="left:3px;top:708px;line-height:22px;height:22px">4 параметров</div>
</body></html>
